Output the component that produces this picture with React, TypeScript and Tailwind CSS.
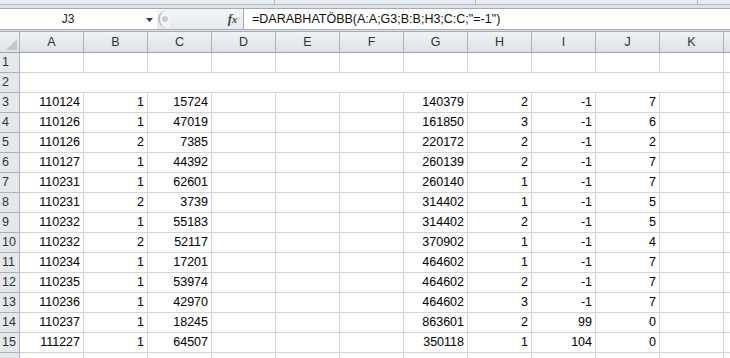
import React from "react";

const cols = ["A", "B", "C", "D", "E", "F", "G", "H", "I", "J", "K"];

// row number -> values by column letter
const data: Record<number, Record<string, string>> = {
  3: { A: "110124", B: "1", C: "15724", G: "140379", H: "2", I: "-1", J: "7" },
  4: { A: "110126", B: "1", C: "47019", G: "161850", H: "3", I: "-1", J: "6" },
  5: { A: "110126", B: "2", C: "7385", G: "220172", H: "2", I: "-1", J: "2" },
  6: { A: "110127", B: "1", C: "44392", G: "260139", H: "2", I: "-1", J: "7" },
  7: { A: "110231", B: "1", C: "62601", G: "260140", H: "1", I: "-1", J: "7" },
  8: { A: "110231", B: "2", C: "3739", G: "314402", H: "1", I: "-1", J: "5" },
  9: { A: "110232", B: "1", C: "55183", G: "314402", H: "2", I: "-1", J: "5" },
  10: { A: "110232", B: "2", C: "52117", G: "370902", H: "1", I: "-1", J: "4" },
  11: { A: "110234", B: "1", C: "17201", G: "464602", H: "1", I: "-1", J: "7" },
  12: { A: "110235", B: "1", C: "53974", G: "464602", H: "2", I: "-1", J: "7" },
  13: { A: "110236", B: "1", C: "42970", G: "464602", H: "3", I: "-1", J: "7" },
  14: { A: "110237", B: "1", C: "18245", G: "863601", H: "2", I: "99", J: "0" },
  15: { A: "111227", B: "1", C: "64507", G: "350118", H: "1", I: "104", J: "0" },
};

const rows = Array.from({ length: 16 }, (_, i) => i + 1);

function FormulaBar() {
  return (
    <div className="flex h-[22px] border-y border-[#a5acb5] bg-white">
      <div className="relative flex w-[157px] items-center bg-white">
        <span className="w-[136px] text-center text-[12px] text-[#1e1e1e]">J3</span>
        <svg width="7" height="4" viewBox="0 0 7 4" className="absolute left-[146px] top-[9px]">
          <path d="M0 0h7L3.5 4z" fill="#3c3c3c" />
        </svg>
      </div>
      <div className="flex w-[86px] items-center bg-gradient-to-b from-[#f4f6f8] to-[#e6e9ed]">
        <div className="ml-px flex h-[18px] w-[12px] items-center justify-center rounded-l-full border-l-2 border-[#b8bec6] bg-[#f3f4f6]">
          <div className="h-[6px] w-[6px] rounded-full bg-[#c9cdd2]" />
        </div>
        <span className="ml-auto mr-[6px] font-['Liberation_Serif'] text-[13px] font-bold italic text-[#444]">
          f<span className="text-[10px]">x</span>
        </span>
      </div>
      <div className="flex flex-1 items-center border-l border-[#a5acb5] pl-[8px] text-[12.5px] text-[#111]">
        =DARABHATÖBB(A:A;G3;B:B;H3;C:C;"=-1")
      </div>
    </div>
  );
}

function Cell({ r, c }: { r: number; c: string }) {
  const v = data[r]?.[c];
  // row 2 has white fill, so gridlines vanish except in K
  const hideGrid = r === 2 && c !== "K";
  return (
    <div
      className={`flex h-[20px] w-[64px] shrink-0 items-center justify-end text-[12.5px] text-black ${
        hideGrid ? "border-b border-b-[#d4d4d4] pr-[4px]" : "border-b border-r border-[#d4d4d4] pr-[3px]"
      }`}
    >
      {v}
    </div>
  );
}

export default function App() {
  return (
    <div className="h-[358px] w-[730px] overflow-hidden bg-[#dfe3e8] font-['Liberation_Sans',sans-serif]">
      {/* ribbon bottom */}
      <div className="flex h-[5px] border-b border-[#b4bac2] bg-[#e8ebef]">
        <div className="w-[275px] border-r border-[#b4bac2]" />
        <div className="w-[201px] border-r border-[#b4bac2]" />
        <div className="w-[222px] border-r border-[#b4bac2]" />
      </div>
      <div className="h-[3px]" />
      <FormulaBar />
      <div className="h-[2px] border-b border-[#a5acb5]" />

      {/* column headers */}
      <div className="flex h-[21px] border-b border-[#9ea5ae] bg-gradient-to-b from-[#f0f2f4] to-[#dee2e7] text-[12.5px] text-[#333]">
        <div className="relative w-[20px] shrink-0 border-r border-[#a9b0b8]">
          <svg width="11" height="11" viewBox="0 0 11 11" className="absolute bottom-[2px] right-[2px]">
            <path d="M11 0v11H0z" fill="#c3c8ce" />
          </svg>
        </div>
        {cols.map((c) => (
          <div key={c} className="flex w-[64px] shrink-0 items-center justify-center border-r border-[#a9b0b8]">
            {c}
          </div>
        ))}
        <div className="flex-1" />
      </div>

      {/* grid */}
      <div className="bg-white">
        {rows.map((r) => (
          <div key={r} className="flex">
            <div className="flex h-[20px] w-[20px] shrink-0 items-center border-b border-r border-[#a9b0b8] bg-[#e4e7eb] pl-[2px] text-[12.5px] text-[#333]">
              {r < 16 ? r : null}
            </div>
            {cols.map((c) => (
              <Cell key={c} r={r} c={c} />
            ))}
            <div className="h-[20px] flex-1 border-b border-[#d4d4d4]" />
          </div>
        ))}
      </div>
    </div>
  );
}
